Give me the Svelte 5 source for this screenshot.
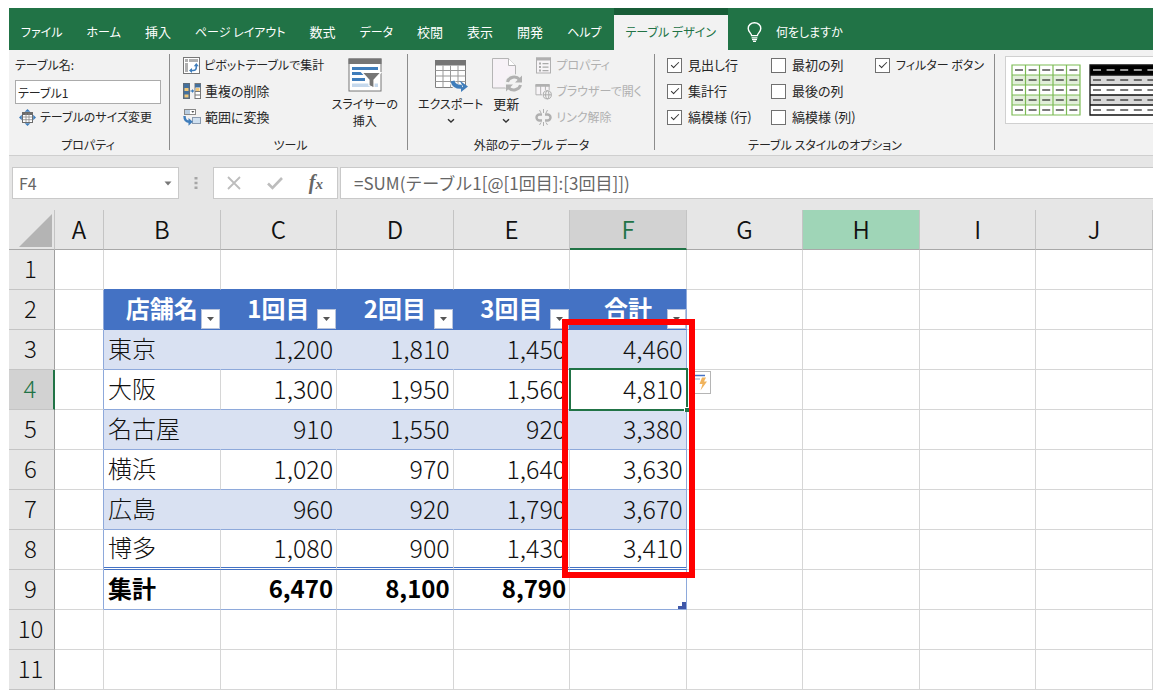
<script>
  const tabs = ['ファイル', 'ホーム', '挿入', 'ページ レイアウト', '数式', 'データ', '校閲', '表示', '開発', 'ヘルプ', 'テーブル デザイン'];
  const activeTab = 'テーブル デザイン';

  const options = [
    { id: 'header-row', label: '見出し行', checked: true },
    { id: 'first-col', label: '最初の列', checked: false },
    { id: 'filter-button', label: 'フィルター ボタン', checked: true },
    { id: 'total-row', label: '集計行', checked: true },
    { id: 'last-col', label: '最後の列', checked: false },
    null,
    { id: 'banded-rows', label: '縞模様 (行)', checked: true },
    { id: 'banded-cols', label: '縞模様 (列)', checked: false }
  ];

  const hasKatakana = (s) => /[ァ-ヶ]/.test(s);

  const columns = ['A', 'B', 'C', 'D', 'E', 'F', 'G', 'H', 'I', 'J'];
  const rows = [1, 2, 3, 4, 5, 6, 7, 8, 9, 10, 11];
  const data = {
    2: ['店舗名', '1回目', '2回目', '3回目', '合計'],
    3: ['東京', '1,200', '1,810', '1,450', '4,460'],
    4: ['大阪', '1,300', '1,950', '1,560', '4,810'],
    5: ['名古屋', '910', '1,550', '920', '3,380'],
    6: ['横浜', '1,020', '970', '1,640', '3,630'],
    7: ['広島', '960', '920', '1,790', '3,670'],
    8: ['博多', '1,080', '900', '1,430', '3,410'],
    9: ['集計', '6,470', '8,100', '8,790', '']
  };

  function inTable(r, c) {
    return r >= 2 && r <= 9 && c >= 1 && c <= 5;
  }
  const grid5 = [0, 1, 2, 3, 4];
</script>

<div class="window">
  <nav class="tabs">
    {#each tabs as tab}
      <button class="tab" class:kanji={!hasKatakana(tab)} class:active={tab === activeTab}>{tab}</button>
    {/each}
    <button class="tell-me">
      <svg width="15" height="20" viewBox="0 0 15 20" fill="none" stroke="#fff" stroke-width="1.4">
        <path d="M4.6 13.6c0-2.3-3.4-3.6-3.4-7.2a6.3 5.7 0 0 1 12.6 0c0 3.600-3.400 4.900-3.400 7.200z" />
        <path d="M4.600 15.800h5.800M5 17.600h5M6 19.300h3" stroke-width="1.200" />
      </svg>
      <span>何をしますか</span>
    </button>
  </nav>

  <div class="ribbon">
    <section class="group properties">
      <div class="body">
        <label class="name-label" for="table-name">テーブル名:</label>
        <input id="table-name" class="table-name" type="text" value="テーブル1" />
        <button class="small resize">
          <svg width="17" height="17" viewBox="0 0 17 17">
            <rect x="3.500" y="3.500" width="10" height="10" fill="#fff" stroke="#6b6b6b" />
            <path d="M3.500 5h10" stroke="#6b6b6b" stroke-width="2" />
            <path d="M3.500 8h10M3.500 10.700h10M7 4v9M10 4v9" stroke="#8a8a8a" stroke-width=".8" />
            <path d="M8.500 0l2.800 2.800H5.700zM8.500 17l2.800-2.800H5.700zM0 8.500l2.800-2.800v5.600zM17 8.500l-2.800-2.800v5.600z" fill="#3f7dbb" />
          </svg>
          <span>テーブルのサイズ変更</span>
        </button>
      </div>
      <h2>プロパティ</h2>
    </section>

    <section class="group tools">
      <div class="body row">
        <div class="stack">
          <button class="small">
            <svg width="17" height="17" viewBox="0 0 17 17">
              <rect x=".5" y=".5" width="16" height="16" fill="#fff" stroke="#777" />
              <path d="M2 2h3v3H2zM6 2h9v3H6zM2 6h3v9H2z" fill="#b0b0b0" />
              <path d="M7.500 13.500h2.500c2.200 0 3.300-1 3.300-3.300V8" fill="none" stroke="#3f7dbb" stroke-width="1.600" />
              <path d="M10.800 9.200L13.300 6l2.500 3.200zM9 11v5l-3-2.500z" fill="#3f7dbb" />
            </svg>
            <span>ピボットテーブルで集計</span>
          </button>
          <button class="small kanji">
            <svg width="18" height="17" viewBox="0 0 18 17">
              <rect x=".5" y=".5" width="6" height="15" fill="#44709c" stroke="#5b6b7b" />
              <path d="M1.500 5h4v3h-4zM1.500 11.500h4v3h-4z" fill="#f2c879" />
              <path d="M7.500 8h2" stroke="#3f7dbb" stroke-width="1.300" />
              <path d="M9 6L11.200 8 9 10z" fill="#3f7dbb" />
              <rect x="12" y=".5" width="5.500" height="15" fill="#fff" stroke="#777" />
              <path d="M12 1h5.500v3.500H12z" fill="#44709c" />
              <path d="M13 5h3.500v3H13z" fill="#f2c879" />
              <path d="M12 8.500h5.500M12 12h5.500" stroke="#777" />
            </svg>
            <span>重複の削除</span>
          </button>
          <button class="small kanji">
            <svg width="18" height="17" viewBox="0 0 18 17">
              <rect x="1.500" y=".5" width="11" height="5" fill="#fff" stroke="#888" />
              <path d="M2 1h5v4H2z" fill="#b9cde0" />
              <path d="M8.300 2h3L9.800 4z" fill="#555" />
              <rect x="9.500" y="8.500" width="8" height="6" fill="#cfe0f0" stroke="#8a9bb0" />
              <path d="M1.500 7c0 4 1.500 5.800 5 5.800" fill="none" stroke="#3f7dbb" stroke-width="2.400" />
              <path d="M5.500 9l4.300 3.800-4.300 3.900z" fill="#3f7dbb" />
            </svg>
            <span>範囲に変換</span>
          </button>
        </div>
        <button class="big">
          <svg width="34" height="34" viewBox="0 0 34 34">
            <rect x="1" y="1" width="32" height="32" fill="#fff" stroke="#777" />
            <path d="M.5.500h33v5.500H.5z" fill="#757575" />
            <path d="M4 9h26v3H4zM4 14h13v3H4zM4 20h13v3H4z" fill="#3f7dbb" />
            <path d="M4 25.500h26v3.500H4z" fill="#c5d8ec" />
            <path d="M14 14.500h19l-7 7.500v8l-5-2.500V22z" fill="#757575" stroke="#fff" stroke-width="1.200" />
          </svg>
          <span>スライサーの<br />挿入</span>
        </button>
      </div>
      <h2>ツール</h2>
    </section>

    <section class="group external">
      <div class="body row">
        <button class="big">
          <svg width="34" height="34" viewBox="0 0 34 34">
            <path d="M1.500 2.500h30v27h-30z" fill="#fff" stroke="#808080" />
            <path d="M1 2h31v5.500H1z" fill="#757575" />
            <path d="M1.500 12.500h30M1.500 18h30M1.500 23.500h30M9 7.500v22M16.500 7.500v22M24 7.500v22" stroke="#999" />
            <path d="M18.500 24c1 3.500 4 5.500 10 5" fill="none" stroke="#f2f2f2" stroke-width="6" />
            <path d="M18.500 23c1 4 4 6.200 9.500 5.800" fill="none" stroke="#3f7dbb" stroke-width="4" />
            <path d="M25.500 22.500L34 28.500 27 34v-3.500l2-2z" fill="#3f7dbb" />
          </svg>
          <span>エクスポート</span>
          <svg class="chevron" width="8" height="6" viewBox="0 0 8 6"><path d="M1 1.300l3 2.800 3-2.800" fill="none" stroke="#333" stroke-width="1.400" /></svg>
        </button>
        <button class="big kanji refresh">
          <svg width="34" height="34" viewBox="0 0 34 34">
            <path d="M3.500.500h16l7 7v22.500h-23z" fill="#f7f2f7" stroke="#b5b5b5" />
            <path d="M19.500.500v7h7" fill="#fff" stroke="#b5b5b5" />
            <circle cx="25" cy="25.500" r="9.500" fill="#f2f2f2" />
            <path d="M18.500 24a6.800 6.300 0 0 1 12-2.500M31.500 27a6.800 6.300 0 0 1-12 2.500" fill="none" stroke="#b0b0b0" stroke-width="3" />
            <path d="M33 17.500v7h-7zM17 33.500v-7h7z" fill="#b0b0b0" />
          </svg>
          <span>更新</span>
          <svg class="chevron" width="8" height="6" viewBox="0 0 8 6"><path d="M1 1.300l3 2.800 3-2.800" fill="none" stroke="#333" stroke-width="1.400" /></svg>
        </button>
        <div class="stack">
          <button class="small" disabled>
            <svg width="17" height="17" viewBox="0 0 17 17">
              <rect x="1.500" y="1" width="14" height="15" fill="#f7f4f7" stroke="#b0b0b0" />
              <path d="M1 .5h15v3H1z" fill="#b0b0b0" />
              <path d="M4 5.500h2v2H4zM4 9h2v2H4zM4 12.500h2v2H4zM7.500 6h6v1.200h-6zM7.500 9.500h6v1.200h-6zM7.500 13h6v1.200h-6z" fill="#aaa" />
            </svg>
            <span>プロパティ</span>
          </button>
          <button class="small" disabled>
            <svg width="17" height="17" viewBox="0 0 18 17">
              <path d="M1 1.500h14V12H1z" fill="#f7f4f7" stroke="#b0b0b0" />
              <path d="M.5.500h15v3H.5zM5.500 3h1v9h-1zM10.500 3h1v6h-1z" fill="#b0b0b0" />
              <circle cx="13" cy="12" r="5.500" fill="#f2f2f2" />
              <g fill="none" stroke="#a8a8a8"><circle cx="13" cy="12" r="4.300" /><ellipse cx="13" cy="12" rx="1.800" ry="4.300" /><path d="M8.700 12h8.600" /></g>
            </svg>
            <span>ブラウザーで開く</span>
          </button>
          <button class="small" disabled>
            <svg width="17" height="17" viewBox="0 0 17 17" fill="none" stroke="#b0b0b0">
              <path d="M7 5.500H4.500a3 3 0 0 0 0 6H7M10 5.500h2.500a3 3 0 0 1 0 6H10" stroke-width="2.400" />
              <path d="M8.500 0v4M4.500 1l1.500 3M12.500 1L11 4M8.500 13v4M4.500 16L6 13.500M12.500 16L11 13.500" />
            </svg>
            <span>リンク解除</span>
          </button>
        </div>
      </div>
      <h2>外部のテーブル データ</h2>
    </section>

    <section class="group style-options">
      <div class="body options">
        {#each options as o}
          {#if o}
            <label class="option" class:kanji={!hasKatakana(o.label)} for={o.id}>
              <input type="checkbox" id={o.id} checked={o.checked} />
              <span>{o.label}</span>
            </label>
          {:else}
            <span></span>
          {/if}
        {/each}
      </div>
      <h2>テーブル スタイルのオプション</h2>
    </section>

    <section class="styles">
      <div class="gallery">
        <button class="thumb" aria-label="緑">
          <svg width="70" height="52" viewBox="0 0 70 52">
            <rect x=".5" y=".5" width="69" height="51" fill="#fff" />
            <path d="M1 11h68v10H1zM1 31h68v10H1z" fill="#e2efda" />
            <path d="M1 1h68v50H1zM1 11h68M1 21h68M1 31h68M1 41h68M14.500 1v50M28.500 1v50M42 1v50M55.500 1v50" fill="none" stroke="#7cbb55" stroke-width="1.200" />
            {#each grid5 as r}
              {#each grid5 as c}
                <path d="M{4 + c * 13.6} {6 + r * 10}h8" stroke="#222" stroke-width="1.200" />
              {/each}
            {/each}
          </svg>
        </button>
        <button class="thumb" aria-label="黒">
          <svg width="70" height="52" viewBox="0 0 70 52">
            <rect x=".5" y=".5" width="69" height="51" fill="#fff" />
            <path d="M1 1h68v10H1z" fill="#000" />
            <path d="M1 11h68v10H1zM1 31h68v10H1z" fill="#d9d9d9" />
            <path d="M1 1h68v50H1zM1 11h68M1 21h68M1 31h68M1 41h68" fill="none" stroke="#111" stroke-width="1.300" />
            {#each grid5 as r}
              {#each grid5 as c}
                <path d="M{4 + c * 13.6} {6 + r * 10}h8" stroke={r === 0 ? '#fff' : '#222'} stroke-width="1.200" />
              {/each}
            {/each}
          </svg>
        </button>
      </div>
    </section>
  </div>

  <div class="formula-bar">
    <div class="name-box">
      <input type="text" value="F4" aria-label="名前ボックス" />
      <button aria-label="名前の一覧"><svg width="8" height="5" viewBox="0 0 8 5"><path d="M.5.500h7L4 4.500z" fill="#777" /></svg></button>
    </div>
    <svg class="grip" width="4" height="14" viewBox="0 0 4 14"><path d="M.5 1h3v2.500h-3zM.5 5.700h3v2.500h-3zM.5 10.400h3v2.500h-3z" fill="#a6a6a6" /></svg>
    <div class="actions">
      <button aria-label="キャンセル"><svg width="16" height="14" viewBox="0 0 16 14"><path d="M2 1l12 12M14 1L2 13" stroke="#bdbdbd" stroke-width="1.800" /></svg></button>
      <button aria-label="入力"><svg width="16" height="14" viewBox="0 0 16 14"><path d="M1 7.500l4.500 4.500L15 2" fill="none" stroke="#bdbdbd" stroke-width="2.600" /></svg></button>
      <button class="fx" aria-label="関数の挿入"><i>f</i><i class="x">x</i></button>
    </div>
    <input class="formula" type="text" value="=SUM(テーブル1[@[1回目]:[3回目]])" aria-label="数式バー" />
  </div>

  <table class="sheet">
    <colgroup>
      <col class="c-head" />
      <col class="c-a" />
      {#each columns.slice(1) as c}<col />{/each}
    </colgroup>
    <thead>
      <tr>
        <th class="corner"><svg width="33" height="33" viewBox="0 0 33 33"><path d="M33 0v33H0z" fill="#b4b4b4" /></svg></th>
        {#each columns as c}
          <th class:selected={c === 'F'} class:hovered={c === 'H'}>{c}</th>
        {/each}
      </tr>
    </thead>
    <tbody>
      {#each rows as r}
        <tr>
          <th class:selected={r === 4}>{r}</th>
          {#each columns as col, c}
            {#if inTable(r, c)}
              <td
                class="cell"
                class:head={r === 2}
                class:band={r === 3 || r === 5 || r === 7}
                class:last={r === 8}
                class:total={r === 9}
                class:num={r > 2 && c > 1}
                class:right={c === 5}
              >
                {data[r][c - 1]}
                {#if r === 2}
                  <button class="filter" aria-label="フィルター"><svg width="7" height="4" viewBox="0 0 7 4"><path d="M0 0h7L3.500 4z" fill="#555" /></svg></button>
                {/if}
                {#if r === 3 && c === 5}<span class="callout"></span>{/if}
                {#if r === 4 && c === 5}
                  <span class="selection"></span>
                  <button class="quick" aria-label="オートコレクトのオプション">
                    <svg width="20" height="21" viewBox="0 0 20 21">
                      <path d="M2 3.500h13" stroke="#4472c4" stroke-width="1.500" />
                      <path d="M2 7h8" stroke="#9aa5bb" />
                      <path d="M12 5.500h4l-2 4h3l-6.500 9 2-6.500H9.500z" fill="#f0b35c" />
                    </svg>
                  </button>
                {/if}
                {#if r === 9 && c === 5}
                  <svg class="corner-mark" width="8" height="7" viewBox="0 0 8 7"><path d="M4 0h4v7H0V4h4z" fill="#3f57a8" /></svg>
                {/if}
              </td>
            {:else}
              <td class:above={r === 1 && c >= 1 && c <= 5} class:before={c === 0 && r >= 2 && r <= 9}></td>
            {/if}
          {/each}
        </tr>
      {/each}
    </tbody>
  </table>
</div>

<style>
  :global(body) {
    background: #fff;
  }
  .window {
    padding: 8px 9px;
    font-family: 'Noto Sans CJK JP', sans-serif;
    font-size: 12px;
    line-height: 18px;
    color: #262626;
    overflow: hidden;
  }
  button,
  input {
    font: inherit;
    color: inherit;
    margin: 0;
    box-sizing: border-box;
    border-radius: 0;
  }
  button {
    padding: 0;
    border: 0;
    background: none;
    white-space: nowrap;
  }
  svg {
    display: block;
    flex: none;
  }
  .kanji {
    font-size: 13px;
  }

  .tabs {
    display: flex;
    height: 42px;
    background: #217346;
    color: #fff;
    font-feature-settings: 'palt';
  }
  .tab {
    padding: 5px 12px 0;
  }
  .tab.active {
    border-top: 7px solid #185c37;
    background: #f2f2f2;
    color: #217346;
    padding: 0 12px 2px;
  }
  .tell-me {
    display: flex;
    align-items: center;
    gap: 14px;
    padding: 5px 19px 0;
  }

  .ribbon {
    display: flex;
    background: #f2f2f2;
    border-bottom: 1px solid #cfcfcf;
    padding: 2px 0 0;
    font-feature-settings: 'palt';
  }
  .group {
    flex: none;
    box-sizing: border-box;
    display: flex;
    flex-direction: column;
    position: relative;
  }
  .group::after {
    content: '';
    position: absolute;
    top: 2px;
    right: 0;
    bottom: 5px;
    border-right: 1px solid #8c8c8c;
  }
  .properties {
    width: 161px;
    padding: 0 9px 0 6px;
  }
  .tools {
    width: 238px;
    padding: 0 10px 0 13px;
  }
  .external {
    width: 247px;
    padding: 0 10px;
  }
  .style-options {
    width: 340px;
    padding: 0 12px;
  }
  .body {
    height: 80px;
  }
  .row {
    display: flex;
  }
  .tools .row {
    justify-content: space-between;
  }
  h2 {
    margin: 0;
    padding-top: 2px;
    font-size: 12px;
    font-weight: 400;
    line-height: 21px;
    text-align: center;
  }
  .name-label {
    display: block;
    line-height: 26px;
  }
  .table-name {
    display: block;
    width: 100%;
    height: 24px;
    padding: 0 2px;
    margin-top: 2px;
    border: 1px solid #ababab;
    background: #fff;
    font-feature-settings: 'palt';
  }
  .resize {
    padding-left: 4px;
  }
  .small {
    display: flex;
    align-items: center;
    gap: 4px;
    height: 26px;
  }
  .small:disabled {
    color: #b0b0b0;
  }
  .big {
    display: flex;
    flex-direction: column;
    align-items: center;
    padding-top: 6px;
  }
  .big span {
    margin-top: 3px;
    line-height: 17px;
  }
  .chevron {
    margin-top: 6px;
  }
  .refresh {
    margin: 0 12px 0 6px;
  }
  .options {
    display: grid;
    grid-template-columns: 104px 104px auto;
    grid-auto-rows: 26px;
    white-space: nowrap;
  }
  .option {
    display: flex;
    align-items: center;
    gap: 6px;
  }
  .option input {
    appearance: none;
    flex: none;
    display: grid;
    place-items: center;
    width: 15px;
    height: 15px;
    border: 1px solid #707070;
    background: #fff;
  }
  .option input:checked::after {
    content: '';
    width: 7px;
    height: 3px;
    border: solid #333;
    border-width: 0 0 1px 1px;
    transform: translateY(-1px) rotate(-45deg);
  }
  .styles {
    flex: 1;
    min-width: 0;
    padding: 4px 0 0 10px;
  }
  .gallery {
    display: flex;
    gap: 8px;
    overflow: hidden;
    padding: 7px 0 7px 5px;
    border: 1px solid #d0d0d0;
    border-right: 0;
    background: #fff;
  }

  .formula-bar {
    display: flex;
    align-items: center;
    padding: 11px 0 11px 3px;
    background: #e6e6e6;
    color: #666;
    font-size: 17px;
  }
  .name-box,
  .actions,
  .formula {
    height: 32px;
    box-sizing: border-box;
    border: 1px solid #c9c9c9;
    background: #fff;
  }
  .name-box {
    display: flex;
    width: 167px;
  }
  .name-box input {
    flex: 1;
    min-width: 0;
    border: 0;
    padding: 0 0 0 6px;
    background: none;
    font-size: 16px;
  }
  .name-box button {
    padding: 0 6px;
  }
  .grip {
    margin: 0 15px;
  }
  .actions {
    display: flex;
    align-items: center;
    justify-content: space-between;
    width: 125px;
    padding: 0 14px 0 12px;
  }
  .fx {
    font-family: 'Liberation Serif', serif;
    font-size: 20px;
    font-weight: 700;
  }
  .fx .x {
    font-size: 15px;
  }
  .formula {
    flex: 1;
    min-width: 0;
    margin-left: 2px;
    border-right: 0;
    padding: 0 13px 2px;
  }

  .sheet {
    width: 100%;
    table-layout: fixed;
    border-collapse: separate;
    border-spacing: 0;
    font-size: 24px;
    line-height: 32px;
    color: #111;
  }
  .c-head {
    width: 46px;
  }
  .c-a {
    width: 49px;
  }
  th,
  td {
    box-sizing: border-box;
    height: 40px;
    padding: 0 4px 4px;
    border: solid #d6d6d6;
    border-width: 0 1px 1px 0;
    white-space: nowrap;
  }
  th {
    background: #e6e6e6;
    border-color: #b5b5b5;
    font-weight: 300;
    text-align: center;
  }
  thead th {
    padding: 0 0 2px;
    border-right-color: #c4c4c4;
    border-bottom-color: #a8a8a8;
    font-weight: 350;
  }
  tbody th {
    border-bottom-color: #c4c4c4;
    border-right-color: #a0a0a0;
    padding: 0 2px 4px 0;
  }
  .corner svg {
    margin: 4px 2px 0 auto;
  }
  thead .selected {
    background: #d2d2d2;
    color: #217346;
    border-bottom: 2px solid #217346;
    padding-bottom: 1px;
  }
  tbody .selected {
    background: #d2d2d2;
    color: #217346;
    border-right: 2px solid #217346;
  }
  .hovered {
    background: #9fd5b7;
  }
  td.above {
    border-bottom-color: #4472c4;
  }
  td.before {
    border-right-color: #8ea9db;
  }
  .cell {
    position: relative;
    border-bottom-color: #8ea9db;
    font-weight: 300;
  }
  .cell.right {
    border-right-color: #8ea9db;
  }
  .head {
    background: #4472c4;
    border-color: #4472c4;
    color: #fff;
    font-weight: 700;
    text-align: center;
  }
  .band {
    background: #d9e1f2;
    border-right-color: #d9e1f2;
  }
  .num {
    text-align: right;
    padding-right: 3px;
    font-size: 25px;
  }
  .last {
    border-bottom: 3px double #4472c4;
  }
  .total {
    font-size: 24px;
    font-weight: 700;
    color: #000;
  }
  .filter {
    position: absolute;
    right: 0;
    bottom: 0;
    display: grid;
    place-items: center;
    width: 19px;
    height: 20px;
    border: 1px solid #b8c4dc;
    background: #fff;
  }
  .callout {
    position: absolute;
    z-index: 3;
    top: -11px;
    left: -8px;
    right: -9px;
    height: 259px;
    box-sizing: border-box;
    border: 6px solid #f00;
    pointer-events: none;
  }
  .selection {
    position: absolute;
    z-index: 1;
    inset: -2px -2px -2px -1px;
    border: 2px solid #217346;
    pointer-events: none;
  }
  .selection::after {
    content: '';
    position: absolute;
    right: -3px;
    bottom: -3px;
    width: 4px;
    height: 4px;
    background: #217346;
    border: solid #fff;
    border-width: 1px 0 0 1px;
  }
  .quick {
    position: absolute;
    z-index: 2;
    top: 1px;
    left: 100%;
    margin-left: 3px;
    border: 1px solid #b5b5b5;
    background: #fff;
  }
  .corner-mark {
    position: absolute;
    right: 0;
    bottom: 0;
  }
</style>
